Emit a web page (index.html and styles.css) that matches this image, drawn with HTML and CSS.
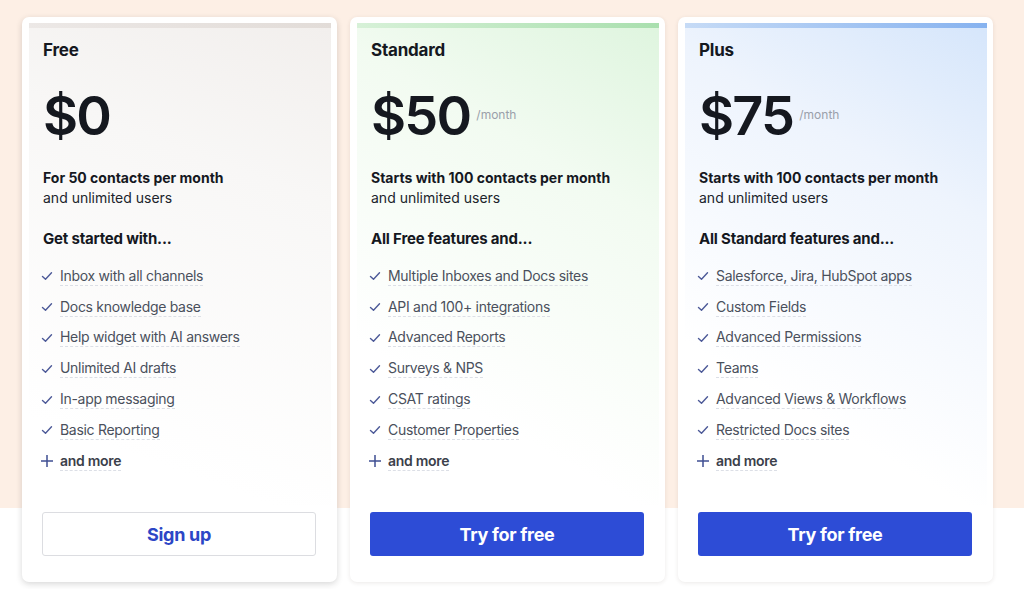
FILE: index.html
```html
<!DOCTYPE html>
<html lang="en">
<head>
<meta charset="utf-8">
<title>Pricing</title>
<link rel="stylesheet" href="styles.css">
</head>
<body>
<div class="plans">
  <div class="card card-free">
    <div class="panel">
      <h2 class="name">Free</h2>
      <div class="price"><span class="amount">$0</span></div>
      <p class="contacts"><strong>For 50 contacts per month</strong><br>and unlimited users</p>
      <h3 class="lead">Get started with...</h3>
      <ul class="features">
        <li><svg class="check" viewBox="0 0 12 12"><path d="M1.5 6.5 L4.5 9.3 L10.5 2.8"/></svg><span>Inbox with all channels</span></li>
        <li><svg class="check" viewBox="0 0 12 12"><path d="M1.5 6.5 L4.5 9.3 L10.5 2.8"/></svg><span>Docs knowledge base</span></li>
        <li><svg class="check" viewBox="0 0 12 12"><path d="M1.5 6.5 L4.5 9.3 L10.5 2.8"/></svg><span>Help widget with AI answers</span></li>
        <li><svg class="check" viewBox="0 0 12 12"><path d="M1.5 6.5 L4.5 9.3 L10.5 2.8"/></svg><span>Unlimited AI drafts</span></li>
        <li><svg class="check" viewBox="0 0 12 12"><path d="M1.5 6.5 L4.5 9.3 L10.5 2.8"/></svg><span>In-app messaging</span></li>
        <li><svg class="check" viewBox="0 0 12 12"><path d="M1.5 6.5 L4.5 9.3 L10.5 2.8"/></svg><span>Basic Reporting</span></li>
        <li class="more"><svg class="plus" viewBox="0 0 14 14"><path d="M7 1 V13 M1 7 H13"/></svg><span>and more</span></li>
      </ul>
    </div>
    <a class="btn btn-outline">Sign up</a>
  </div>

  <div class="card card-standard">
    <div class="panel">
      <h2 class="name">Standard</h2>
      <div class="price"><span class="amount">$50</span><span class="per">/month</span></div>
      <p class="contacts"><strong>Starts with 100 contacts per month</strong><br>and unlimited users</p>
      <h3 class="lead">All Free features and...</h3>
      <ul class="features">
        <li><svg class="check" viewBox="0 0 12 12"><path d="M1.5 6.5 L4.5 9.3 L10.5 2.8"/></svg><span>Multiple Inboxes and Docs sites</span></li>
        <li><svg class="check" viewBox="0 0 12 12"><path d="M1.5 6.5 L4.5 9.3 L10.5 2.8"/></svg><span>API and 100+ integrations</span></li>
        <li><svg class="check" viewBox="0 0 12 12"><path d="M1.5 6.5 L4.5 9.3 L10.5 2.8"/></svg><span>Advanced Reports</span></li>
        <li><svg class="check" viewBox="0 0 12 12"><path d="M1.5 6.5 L4.5 9.3 L10.5 2.8"/></svg><span>Surveys &amp; NPS</span></li>
        <li><svg class="check" viewBox="0 0 12 12"><path d="M1.5 6.5 L4.5 9.3 L10.5 2.8"/></svg><span>CSAT ratings</span></li>
        <li><svg class="check" viewBox="0 0 12 12"><path d="M1.5 6.5 L4.5 9.3 L10.5 2.8"/></svg><span>Customer Properties</span></li>
        <li class="more"><svg class="plus" viewBox="0 0 14 14"><path d="M7 1 V13 M1 7 H13"/></svg><span>and more</span></li>
      </ul>
    </div>
    <a class="btn btn-solid">Try for free</a>
  </div>

  <div class="card card-plus">
    <div class="panel">
      <h2 class="name">Plus</h2>
      <div class="price"><span class="amount">$75</span><span class="per">/month</span></div>
      <p class="contacts"><strong>Starts with 100 contacts per month</strong><br>and unlimited users</p>
      <h3 class="lead">All Standard features and...</h3>
      <ul class="features">
        <li><svg class="check" viewBox="0 0 12 12"><path d="M1.5 6.5 L4.5 9.3 L10.5 2.8"/></svg><span>Salesforce, Jira, HubSpot apps</span></li>
        <li><svg class="check" viewBox="0 0 12 12"><path d="M1.5 6.5 L4.5 9.3 L10.5 2.8"/></svg><span>Custom Fields</span></li>
        <li><svg class="check" viewBox="0 0 12 12"><path d="M1.5 6.5 L4.5 9.3 L10.5 2.8"/></svg><span>Advanced Permissions</span></li>
        <li><svg class="check" viewBox="0 0 12 12"><path d="M1.5 6.5 L4.5 9.3 L10.5 2.8"/></svg><span>Teams</span></li>
        <li><svg class="check" viewBox="0 0 12 12"><path d="M1.5 6.5 L4.5 9.3 L10.5 2.8"/></svg><span>Advanced Views &amp; Workflows</span></li>
        <li><svg class="check" viewBox="0 0 12 12"><path d="M1.5 6.5 L4.5 9.3 L10.5 2.8"/></svg><span>Restricted Docs sites</span></li>
        <li class="more"><svg class="plus" viewBox="0 0 14 14"><path d="M7 1 V13 M1 7 H13"/></svg><span>and more</span></li>
      </ul>
    </div>
    <a class="btn btn-solid">Try for free</a>
  </div>
</div>
</body>
</html>
```

FILE: styles.css
```css
* { box-sizing: border-box; }

html, body {
  margin: 0;
  padding: 0;
}

body {
  width: 1024px;
  height: 589px;
  overflow: hidden;
  font-family: "Inter", "Liberation Sans", sans-serif;
  color: #15181f;
  background: linear-gradient(to bottom, #fdefe5 0, #fdefe5 508px, #ffffff 508px);
}

.plans {
  display: flex;
  gap: 13px;
  padding: 17px 0 0 22px;
}

.card {
  width: 315px;
  height: 565px;
  background: #ffffff;
  border-radius: 7px;
  padding: 6px 6px 0 7px;
  display: flex;
  flex-direction: column;
  box-shadow: 0 1px 4px rgba(60, 40, 30, 0.10);
}

.card-free {
  box-shadow: 0 2px 6px rgba(40, 40, 40, 0.18);
}

.panel {
  height: 482px;
  padding: 11px 14px 0;
  border-top: 5px solid;
}

.card-free .panel {
  border-image: linear-gradient(to right, #ece8e6, #e2dcd8) 1;
  background: linear-gradient(200deg, #f2efed 0%, #f8f7f6 30%, #ffffff 85%);
}

.card-standard .panel {
  border-image: linear-gradient(to right, #d7f1d8, #a9dfae) 1;
  background: linear-gradient(210deg, #dff5df 0%, #f2fbf1 30%, #ffffff 75%);
}

.card-plus .panel {
  border-image: linear-gradient(to right, #c6dbf6, #86b2ef) 1;
  background: linear-gradient(210deg, #d6e6fb 0%, #eef4fd 30%, #ffffff 75%);
}

.name {
  margin: 0;
  font-size: 17px;
  line-height: 22px;
  font-weight: 700;
  letter-spacing: -0.2px;
}

.price {
  display: flex;
  align-items: center;
  margin-top: 25px;
  height: 60px;
}

.amount {
  font-size: 54px;
  line-height: 60px;
  font-weight: 600;
  letter-spacing: -1.8px;
}

.per {
  margin-left: 6px;
  font-size: 12px;
  color: #9aa0aa;
  margin-top: -4px;
}

.contacts {
  margin: 22px 0 0;
  font-size: 14px;
  line-height: 20px;
  color: #20242c;
}

.contacts strong {
  font-weight: 700;
  color: #15181f;
}

.lead {
  margin: 21px 0 0;
  font-size: 15px;
  line-height: 20px;
  font-weight: 700;
  letter-spacing: -0.2px;
}

.features {
  list-style: none;
  margin: 12px 0 0;
  padding: 0;
}

.features li {
  display: flex;
  align-items: center;
  height: 30.8px;
  font-size: 14px;
  letter-spacing: -0.3px;
  color: #4a505c;
}

.features li span {
  border-bottom: 1px dashed #dcdfe6;
  line-height: 18px;
}

.check {
  width: 12px;
  height: 12px;
  margin-left: -2px;
  margin-right: 7px;
  fill: none;
  stroke: #4d5a98;
  stroke-width: 1.4;
  stroke-linecap: round;
  stroke-linejoin: round;
}

.plus {
  width: 14px;
  height: 14px;
  margin-left: -3px;
  margin-right: 6px;
  fill: none;
  stroke: #3f4f93;
  stroke-width: 1.5;
}

.features li.more span {
  font-weight: 600;
  color: #3b404a;
}

.btn {
  display: flex;
  align-items: center;
  justify-content: center;
  height: 44px;
  margin: 7px 15px 0 13px;
  border-radius: 3px;
  font-size: 18px;
  font-weight: 700;
  letter-spacing: -0.3px;
  text-decoration: none;
  cursor: pointer;
}

.btn-outline {
  border: 1px solid #dcdde1;
  color: #2c46c6;
  background: #ffffff;
}

.btn-solid {
  background: #2d4cd6;
  color: #ffffff;
}
```
